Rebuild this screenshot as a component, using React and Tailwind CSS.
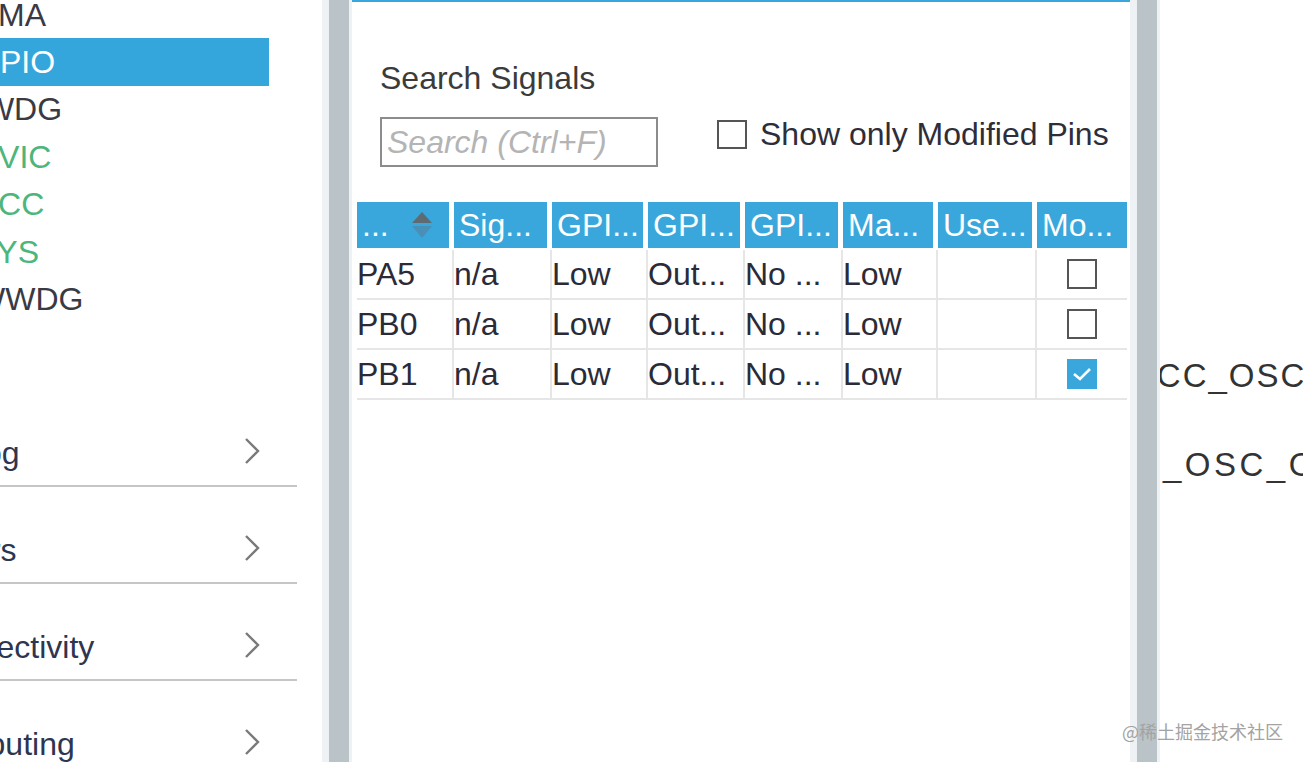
import React from "react";

const FONT = "font-['Liberation_Sans',Arial,sans-serif]";

const items = [
  { label: "DMA", color: "text-[#3a3a44]" },
  { label: "GPIO", selected: true },
  { label: "IWDG", color: "text-[#3a3a44]" },
  { label: "NVIC", color: "text-[#4cb67c]" },
  { label: "RCC", color: "text-[#4cb67c]" },
  { label: "SYS", color: "text-[#4cb67c]" },
  { label: "WWDG", color: "text-[#3a3a44]" },
];

const categories = ["Analog", "Timers", "Connectivity", "Computing"];

const widths = [92, 93, 91, 92, 93, 90, 94, 90];
const headers = ["...", "Sig...", "GPI...", "GPI...", "GPI...", "Ma...", "Use...", "Mo..."];
const rows = [
  { pin: "PA5", checked: false },
  { pin: "PB0", checked: false },
  { pin: "PB1", checked: true },
];

function Chevron() {
  return (
    <svg width="16" height="28" viewBox="0 0 16 28" className="shrink-0">
      <polyline points="2,2 14,14 2,26" fill="none" stroke="#7a7a7a" strokeWidth="2.4" />
    </svg>
  );
}

function SortArrows() {
  return (
    <svg width="22" height="28" viewBox="0 0 22 28">
      <polygon points="11,1 21,12 1,12" fill="#5f6b72" />
      <polygon points="11,27 21,15 1,15" fill="#4a8fb5" />
    </svg>
  );
}

function Box({ checked }) {
  if (checked) {
    return (
      <span className="flex h-[30px] w-[30px] items-center justify-center bg-[#3aa7dc]">
        <svg width="20" height="16" viewBox="0 0 20 16">
          <polyline points="2,8 8,13 18,3" fill="none" stroke="#fff" strokeWidth="2.6" />
        </svg>
      </span>
    );
  }
  return <span className="block h-[30px] w-[30px] border-2 border-[#555]" />;
}

function Divider() {
  return (
    <div className="flex h-full w-[30px] shrink-0">
      <div className="w-[7px] bg-[#eef2f5]" />
      <div className="w-[20px] bg-[#b9c3c8]" />
      <div className="w-[3px] bg-[#eef2f5]" />
    </div>
  );
}

export default function App() {
  return (
    <div className={`relative flex h-[762px] w-[1303px] overflow-hidden bg-white text-[32px] ${FONT}`}>
      {/* peripheral list */}
      <aside className="h-full w-[322px] shrink-0 overflow-hidden">
        <ul className="mt-[-9px]">
          {items.map((it) => (
            <li
              key={it.label}
              className={`flex h-[47.4px] items-center leading-none ${
                it.selected ? "w-[269px] bg-[#35a6dc] text-white" : it.color
              }`}
            >
              <span className="ml-[-25px] whitespace-nowrap">{it.label}</span>
            </li>
          ))}
        </ul>
        <div className="mt-[67px]">
          {categories.map((c) => (
            <div
              key={c}
              className="flex h-[97px] w-[297px] items-end justify-between border-b-2 border-[#c6c6c6] pb-[12px] pr-[37px] text-[#2e3550]"
            >
              <span className="ml-[-80px] whitespace-nowrap leading-[40px]">{c}</span>
              <span className="mb-[8px]">
                <Chevron />
              </span>
            </div>
          ))}
        </div>
      </aside>

      <Divider />

      {/* pin configuration panel */}
      <main className="h-full w-[778px] shrink-0 border-t-2 border-[#3aa7dc] bg-white">
        <div className="pl-[28px] pt-[56px]">
          <div className="leading-[40px] text-[#3b3b3b]">Search Signals</div>
          <div className="mt-[19px] flex items-start">
            <div className="flex h-[50px] w-[278px] items-center border-2 border-[#8c8c8c] pl-[5px] italic text-[#b4b4b4]">
              Search (Ctrl+F)
            </div>
            <label className="ml-[59px] mt-[2px] flex items-center gap-[13px] text-[#2e2e3a]">
              <span className="block h-[29px] w-[30px] border-2 border-[#555]" />
              <span className="leading-[30px]">Show only Modified Pins</span>
            </label>
          </div>
        </div>

        <div className="mt-[35px] pl-[5px]">
          <div className="flex gap-[5px]">
            {headers.map((h, i) => (
              <div
                key={i}
                style={{ width: widths[i] }}
                className="flex h-[46px] items-center justify-between bg-[#3aa7dc] pl-[5px] pr-[16px] leading-none text-white"
              >
                <span className="whitespace-nowrap">{h}</span>
                {i === 0 && <SortArrows />}
              </div>
            ))}
          </div>
          <div className="mt-[2px]">
            {rows.map((r) => {
              const cells = [r.pin, "n/a", "Low", "Out...", "No ...", "Low", ""];
              return (
                <div key={r.pin} className="flex">
                  {cells.map((c, i) => (
                    <div
                      key={i}
                      style={{ width: widths[i] + 5 }}
                      className="flex h-[50px] items-center whitespace-nowrap border-b-2 border-r-2 border-[#e6e6e6] leading-none text-[#2b2b38]"
                    >
                      {c}
                    </div>
                  ))}
                  <div className="flex h-[50px] w-[90px] items-center justify-center border-b-2 border-[#e6e6e6]">
                    <Box checked={r.checked} />
                  </div>
                </div>
              );
            })}
          </div>
        </div>
      </main>

      <Divider />

      {/* chip view */}
      <div className="relative h-full flex-1 overflow-hidden text-[#333]">
        <span className="absolute left-[-29px] top-[356px] whitespace-nowrap text-[33px] leading-[40px] tracking-[2px]">
          RCC_OSC_IN
        </span>
        <span className="absolute left-[-79px] top-[445px] whitespace-nowrap text-[33px] leading-[40px] tracking-[3.5px]">
          RCC_OSC_OUT
        </span>
      </div>

      <div className="absolute bottom-[19px] right-[20px] font-['Noto_Sans_CJK_SC',sans-serif] text-[18px] leading-[24px] text-[#a3a3a3]">
        @稀土掘金技术社区
      </div>
    </div>
  );
}
